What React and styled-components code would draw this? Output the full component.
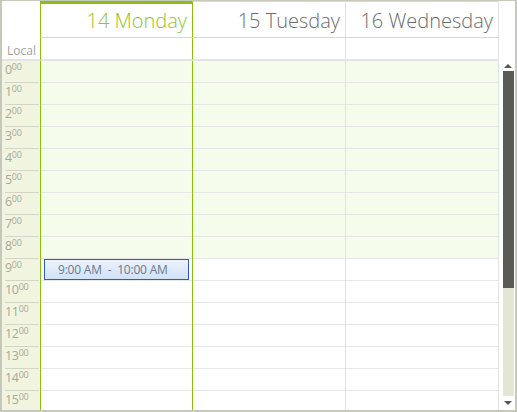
import React from "react";
import styled, { createGlobalStyle } from "styled-components";

const Global = createGlobalStyle`
  html, body { margin: 0; padding: 0; background: #fff; }
  body { font-family: "Open Sans", "Noto Sans", sans-serif; }
  * { box-sizing: border-box; }
`;

const GREEN = "#8dbb1c";
const COLS = "38px 153px 153px 153px 16px";

const Frame = styled.div`
  width: 517px;
  height: 412px;
  border: 2px solid #c6c8b9;
  border-top-width: 1px;
  display: flex;
  flex-direction: column;
  overflow: hidden;
  background: #fff;
`;

const HeaderRow = styled.div`
  display: grid;
  grid-template-columns: ${COLS};
  height: ${(p) => p.$h}px;
`;

const Corner = styled.div`
  background: #fff;
  border-bottom: ${(p) => p.$bb || 0}px solid #e4e4e4;
  display: flex;
  align-items: flex-end;
  justify-content: flex-end;
  padding: 0 4px 1px 0;
  font-size: 12px;
  color: #a59f9f;
  line-height: 14px;
`;

const DayHead = styled.div`
  border-left: 1px solid ${(p) => (p.$active ? GREEN : "transparent")};
  border-right: 1px solid ${(p) => (p.$active ? GREEN : "#e2e2e2")};
  border-top: ${(p) => (p.$active ? `3px solid ${GREEN}` : "1px solid #dcdcd6")};
  border-bottom: 1px solid #d6d6d6;
  margin-left: ${(p) => (p.$active ? 0 : -1)}px;
  display: flex;
  align-items: flex-end;
  justify-content: flex-end;
  padding: 0 5px 3px 0;
  font-size: 20px;
  font-weight: 300;
  line-height: 26px;
  color: ${(p) => (p.$active ? "#93c42a" : "#6b6b6b")};
  white-space: nowrap;
`;

const AllDay = styled.div`
  border-left: 1px solid ${(p) => (p.$active ? GREEN : "transparent")};
  border-right: 1px solid ${(p) => (p.$active ? GREEN : "#e2e2e2")};
  border-bottom: 2px solid #e4e4e4;
  margin-left: ${(p) => (p.$active ? 0 : -1)}px;
`;

const Blank = styled.div`
  background: #fff;
  border-left: 1px solid #e2e2e2;
  margin-left: -1px;
`;

const Body = styled.div`
  flex: 1;
  display: grid;
  grid-template-columns: ${COLS};
  overflow: hidden;
  min-height: 0;
`;

const TimeCol = styled.div`
  background: #f1f4df;
  display: flex;
  flex-direction: column;
`;

const TimeCell = styled.div`
  height: 22px;
  flex: none;
  position: relative;
  padding: 1px 0 0 3px;
  color: #a6a99c;
  font-size: 12.5px;
  line-height: 16px;
  letter-spacing: -0.3px;
  &::after {
    content: "";
    position: absolute;
    left: 3px;
    right: 1px;
    bottom: 0;
    height: 1px;
    background: #d3d6c6;
  }
  sup {
    font-size: 9px;
    vertical-align: top;
    line-height: 10px;
    position: relative;
    top: 0px;
    margin-left: 0px;
  }
`;

const DayCol = styled.div`
  position: relative;
  display: flex;
  flex-direction: column;
  border-left: 1px solid ${(p) => (p.$active ? GREEN : "transparent")};
  border-right: 1px solid ${(p) => (p.$active ? GREEN : "#e2e2e2")};
  margin-left: ${(p) => (p.$active ? 0 : -1)}px;
`;

const Slot = styled.div`
  height: 22px;
  flex: none;
  background: ${(p) => (p.$off ? "#f4fdeb" : "#fff")};
  border-bottom: 1px solid #e6e6e6;
`;

const Event = styled.div`
  position: absolute;
  left: 3px;
  width: 145px;
  top: ${(p) => p.$top}px;
  height: 21px;
  border: 1px solid #2f5fa6;
  background: linear-gradient(#edf3fd, #d0e1f8);
  color: #6a7a8e;
  font-size: 12px;
  letter-spacing: -0.2px;
  line-height: 19px;
  padding-left: 13px;
  white-space: pre;
`;

const Scroll = styled.div`
  display: flex;
  flex-direction: column;
  align-items: center;
  padding: 0 1px 0 3px;
  background: #fff;
`;

const Arrow = styled.div`
  height: ${(p) => p.$h}px;
  flex: none;
  display: flex;
  align-items: center;
  justify-content: center;
  width: 100%;
  &::before {
    content: "";
    width: 0;
    height: 0;
    border-left: 4px solid transparent;
    border-right: 4px solid transparent;
    ${(p) =>
      p.$up
        ? "border-bottom: 4px solid #55564f;"
        : "border-top: 4px solid #55564f;"}
  }
`;

const Thumb = styled.div`
  width: 11px;
  height: 217px;
  background: #5a5b54;
  flex: none;
`;

const Track = styled.div`
  width: 11px;
  height: 108px;
  background: #e3e6d3;
  flex: none;
`;

const days = [
  { label: "14 Monday", active: true },
  { label: "15 Tuesday" },
  { label: "16 Wednesday" },
];

const hours = Array.from({ length: 16 }, (_, i) => i);

export default function App() {
  return (
    <>
      <Global />
      <Frame>
        <HeaderRow $h={37}>
          <Corner />
          {days.map((d) => (
            <DayHead key={d.label} $active={d.active}>
              {d.label}
            </DayHead>
          ))}
          <Blank />
        </HeaderRow>
        <HeaderRow $h={23}>
          <Corner $bb={2}>Local</Corner>
          {days.map((d) => (
            <AllDay key={d.label} $active={d.active} />
          ))}
          <Blank />
        </HeaderRow>
        <Body>
          <TimeCol>
            {hours.map((h) => (
              <TimeCell key={h}>
                {h}
                <sup>00</sup>
              </TimeCell>
            ))}
          </TimeCol>
          {days.map((d, di) => (
            <DayCol key={d.label} $active={d.active}>
              {hours.map((h) => (
                <Slot key={h} $off={h < 9} />
              ))}
              {di === 0 && <Event $top={198}>{"9:00 AM  -  10:00 AM"}</Event>}
            </DayCol>
          ))}
          <Scroll>
            <Arrow $up $h={10} />
            <Thumb />
            <Track />
            <Arrow $h={14} />
          </Scroll>
        </Body>
      </Frame>
    </>
  );
}
